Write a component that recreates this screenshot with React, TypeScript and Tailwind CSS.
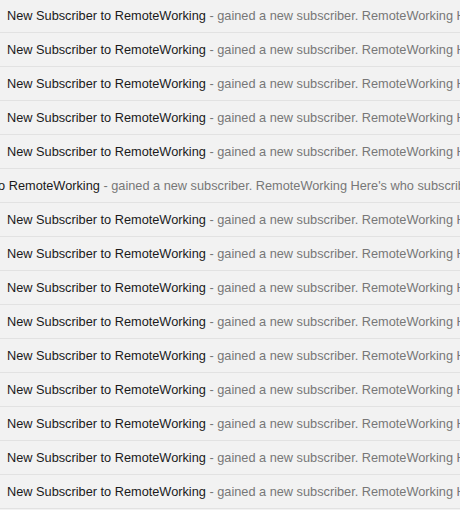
import React from 'react';

const ROWS = 15;

const MailRow: React.FC<{ slid?: boolean }> = ({ slid }) => (
  <div className="h-[34px] border-b border-[#e2e2e2] overflow-hidden flex items-center">
    <div className={`whitespace-nowrap text-[12.75px] ${slid ? 'ml-[-99px]' : 'ml-[7px]'}`}>
      <span className="text-[#1a1a1a]">New Subscriber to RemoteWorking</span>
      <span className="text-[#777]"> - gained a new subscriber. RemoteWorking Here's who subscribed to your channel</span>
    </div>
  </div>
);

const App: React.FC = () => {
  return (
    <div
      className="w-[460px] h-[510px] overflow-hidden bg-[#f2f2f2]"
      style={{ fontFamily: '"Liberation Sans", Arial, sans-serif' }}
    >
      <div className="-mt-px">
        {Array.from({ length: ROWS }).map((_, i) => (
          <MailRow key={i} slid={i === 5} />
        ))}
      </div>
    </div>
  );
};

export default App;
